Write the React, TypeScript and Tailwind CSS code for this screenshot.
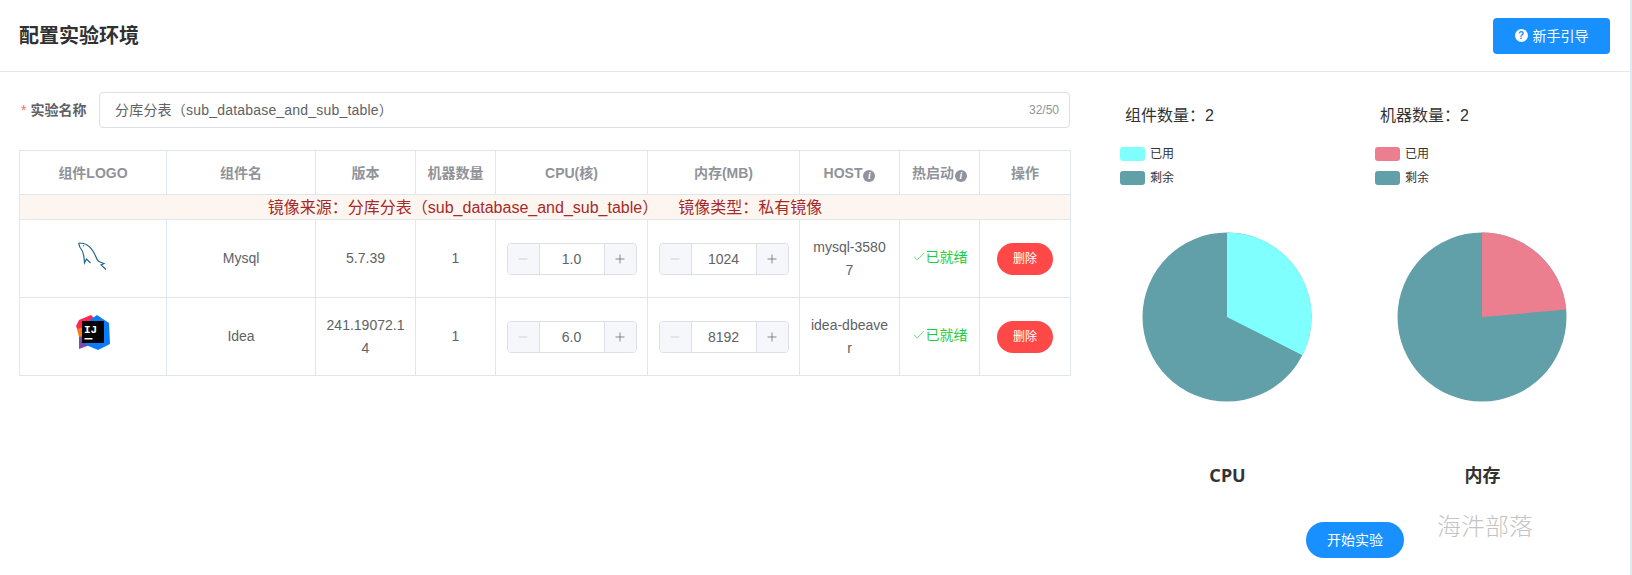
import { Check, Minus, Plus } from "lucide-react";

type Row = {
  name: string;
  version: string;
  machines: number;
  cpu: string;
  memory: number;
  host: string;
  logo: "mysql" | "idea";
};

const rows: Row[] = [
  { name: "Mysql", version: "5.7.39", machines: 1, cpu: "1.0", memory: 1024, host: "mysql-35807", logo: "mysql" },
  { name: "Idea", version: "241.19072.14", machines: 1, cpu: "6.0", memory: 8192, host: "idea-dbeaver", logo: "idea" },
];

const columns = [147, 149, 100, 80, 152, 152, 100, 80, 91];

function InfoDot() {
  return (
    <span className="ml-px inline-flex h-3 w-3 items-center justify-center rounded-full bg-[#909399] align-[-1px] font-['Liberation_Serif',serif] text-[10px] leading-none font-bold text-white italic">
      i
    </span>
  );
}

function MysqlLogo() {
  return (
    <svg viewBox="0 0 40 36" fill="none" stroke="#22668a" strokeWidth="1.2" className="mx-auto h-9 w-10">
      <path d="M5.7 5 C9 5 12 5.5 14 7 C18 9.5 21 14 23 19 C24 22 25 23.5 27 24 L31 25.5 L28 27 L33 31.5" />
      <path d="M5.7 5 C6 8 7 10 9 12.5 C11 15 11 20 11.5 25 L13.5 21 L17.5 25" />
      <path d="M10 7.5 L11 8" />
    </svg>
  );
}

function IdeaLogo() {
  return (
    <svg viewBox="0 0 34 36" className="mx-auto h-9 w-[34px]">
      <polygon points="3,5 15,0 22,7 16,24 2,16 0,11" fill="#fe2857" />
      <polygon points="1,14 8,12 8,24 3,22" fill="#f97a12" />
      <polygon points="3,22 12,20 14,30 3,34" fill="#7b4bab" />
      <polygon points="14,5 21,0 33,8 34,29 22,35 10,30" fill="#087cfa" />
      <rect x="6" y="6" width="22" height="22" fill="#000" />
      <text x="8" y="18" fontSize="11" fontWeight="700" fill="#fff" fontFamily="'Liberation Mono', monospace">
        IJ
      </text>
      <rect x="8.5" y="23" width="8" height="1.5" fill="#fff" />
    </svg>
  );
}

function Stepper({ value }: { value: string | number }) {
  return (
    <div className="mx-auto flex h-[32px] w-[130px] overflow-hidden rounded border border-[#dcdfe6] text-sm text-[#606266]">
      <span className="flex w-8 items-center justify-center border-r border-[#dcdfe6] bg-[#f5f7fa] text-[#c0c4cc]">
        <Minus size={14} strokeWidth={1.25} />
      </span>
      <span className="flex flex-1 items-center justify-center bg-white">{value}</span>
      <span className="flex w-8 items-center justify-center border-l border-[#dcdfe6] bg-[#f5f7fa] text-[#606266]">
        <Plus size={14} strokeWidth={1.25} />
      </span>
    </div>
  );
}

function ChartPanel(props: { title: string; color: string; slice: string; caption: string }) {
  return (
    <div className="w-[255px]">
      <div className="mt-8 pl-[5px] text-base leading-6 text-[#333]">{props.title}</div>
      <div className="mt-[19px] flex flex-col gap-[10px] text-xs text-[#333]">
        {[
          { label: "已用", color: props.color },
          { label: "剩余", color: "#61a0a8" },
        ].map((item) => (
          <div key={item.label} className="flex h-[14px] items-center gap-[5px]">
            <span className="h-[14px] w-[25px] rounded-[3px]" style={{ background: item.color }} />
            <span>{item.label}</span>
          </div>
        ))}
      </div>
      <svg viewBox="0 0 170 170" className="mt-[47px] ml-[22px] h-[170px] w-[170px]">
        <circle cx="85" cy="85" r="84.5" fill="#61a0a8" />
        <path d={props.slice} fill={props.color} />
      </svg>
      <div className="mt-[59px] w-[215px] text-center font-['Noto_Sans','Noto_Sans_CJK_SC',sans-serif] text-lg leading-7 font-bold text-[#333]">
        {props.caption}
      </div>
    </div>
  );
}

export default function App() {
  return (
    <div className="relative flex h-[575px] overflow-hidden bg-white font-['Liberation_Sans','Noto_Sans_CJK_SC',sans-serif]">
      <div className="flex-1">
        {/* Header */}
        <header className="flex h-[72px] items-center justify-between border-b border-[#e4e8f1] pr-5 pl-[19px]">
          <h1 className="text-xl font-bold text-[#303133]">配置实验环境</h1>
          <button className="flex h-9 w-[117px] items-center justify-center gap-[5px] rounded bg-[#1890ff] text-sm text-white">
            <span className="flex h-[13px] w-[13px] items-center justify-center rounded-full bg-white text-[10px] leading-none font-bold text-[#1890ff]">
              ?
            </span>
            新手引导
          </button>
        </header>

        <div className="flex">
          {/* Left: form and table */}
          <div className="w-[1070px] pt-5 pl-[19px]">
            <div className="flex h-9 items-center">
              <label className="w-20 pl-[2px] text-sm font-bold text-[#606266]">
                <span className="mr-1 font-normal text-[#f56c6c]">*</span>
                实验名称
              </label>
              <div className="flex h-9 flex-1 items-center justify-between rounded border border-[#dcdfe6] pr-[10px] pl-[15px]">
                <span className="text-sm tracking-[0.2px] text-[#606266]">分库分表（sub_database_and_sub_table）</span>
                <span className="text-xs text-[#909399]">32/50</span>
              </div>
            </div>

            <table className="mt-[22px] w-[1051px] table-fixed border-collapse text-center text-sm text-[#606266]">
              <colgroup>
                {columns.map((width, i) => (
                  <col key={i} style={{ width }} />
                ))}
              </colgroup>
              <thead>
                <tr className="h-[44px] font-bold text-[#909399]">
                  {["组件LOGO", "组件名", "版本", "机器数量", "CPU(核)", "内存(MB)"].map((label) => (
                    <th key={label} className="border border-[#dfe6ec] font-bold">
                      {label}
                    </th>
                  ))}
                  <th className="border border-[#dfe6ec] font-bold">
                    HOST
                    <InfoDot />
                  </th>
                  <th className="border border-[#dfe6ec] font-bold">
                    热启动
                    <InfoDot />
                  </th>
                  <th className="border border-[#dfe6ec] font-bold">操作</th>
                </tr>
              </thead>
              <tbody>
                <tr className="h-[25px] bg-[#fdf5ef] text-base leading-[22px] text-[#a52a2a]">
                  <td colSpan={9} className="border border-[#dfe6ec] pt-px">
                    <span className="mr-5">镜像来源：分库分表（sub_database_and_sub_table）</span>
                    <span>镜像类型：私有镜像</span>
                  </td>
                </tr>
                {rows.map((row) => (
                  <tr key={row.name} className="h-[78px] leading-[23px]">
                    <td className="border border-[#dfe6ec]">
                      {row.logo === "mysql" ? (
                        <div className="-mt-[6px]">
                          <MysqlLogo />
                        </div>
                      ) : (
                        <div className="-mt-2">
                          <IdeaLogo />
                        </div>
                      )}
                    </td>
                    <td className="border border-[#dfe6ec]">{row.name}</td>
                    <td className="border border-[#dfe6ec] px-[10px] break-all">{row.version}</td>
                    <td className="border border-[#dfe6ec]">{row.machines}</td>
                    <td className="border border-[#dfe6ec]">
                      <Stepper value={row.cpu} />
                    </td>
                    <td className="border border-[#dfe6ec]">
                      <Stepper value={row.memory} />
                    </td>
                    <td className="border border-[#dfe6ec] px-[10px] break-all">{row.host}</td>
                    <td className="border border-[#dfe6ec] text-[#1fce3c]">
                      <span className="inline-flex items-center">
                        <Check size={14} strokeWidth={1.25} />
                        已就绪
                      </span>
                    </td>
                    <td className="border border-[#dfe6ec]">
                      <button className="h-8 w-[56px] rounded-full bg-[#ff4949] text-xs text-white">删除</button>
                    </td>
                  </tr>
                ))}
              </tbody>
            </table>
          </div>

          {/* Right: resource charts */}
          <div className="ml-[50px] flex">
            <ChartPanel
              title="组件数量：2"
              color="#80ffff"
              slice="M85 85 L85 0.5 A84.5 84.5 0 0 1 160.4 123.2 Z"
              caption="CPU"
            />
            <ChartPanel
              title="机器数量：2"
              color="#ec7f8f"
              slice="M85 85 L85 0.5 A84.5 84.5 0 0 1 169.2 77.6 Z"
              caption="内存"
            />
          </div>
        </div>
      </div>
      <div className="w-[2px] shrink-0 bg-[#e4e8f1]" />

      {/* Footer action and watermark sit over the chart column */}
      <button className="absolute top-[522px] left-[1306px] h-9 w-[98px] rounded-full bg-[#1890ff] text-sm text-white">
        开始实验
      </button>
      <span className="absolute top-[511px] left-[1437px] font-['Liberation_Serif','Noto_Sans_CJK_SC',serif] text-2xl font-light text-[#c4c4c4]">
        海汼部落
      </span>
    </div>
  );
}
